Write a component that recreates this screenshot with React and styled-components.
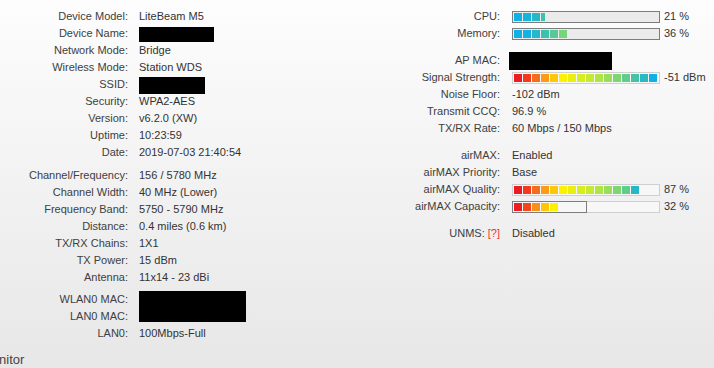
import React from 'react'
import styled, {createGlobalStyle} from 'styled-components'

const GlobalStyle = createGlobalStyle`
  html, body {
    margin: 0;
    padding: 0;
  }
  body {
    width: 714px;
    height: 368px;
    overflow: hidden;
    font-family: "Liberation Sans", Arial, sans-serif;
    font-size: 11px;
    color: #333;
    background: linear-gradient(to bottom, #fdfdfd 0%, #e7e7e7 100%);
  }
`

const Page = styled.div`
  display: flex;
  flex-direction: column;
  padding-top: 8px;
`

const Columns = styled.div`
  display: flex;
`

const Column = styled.div`
  width: ${p => p.width}px;
  display: flex;
  flex-direction: column;
`

const Group = styled.div`
  display: grid;
  grid-template-columns: ${p => p.labelWidth}px 1fr;
  column-gap: ${p => p.gap}px;
  grid-auto-rows: 17px;
  line-height: 17px;
  margin-top: ${p => p.top || 0}px;
`

const Label = styled.div`
  text-align: right;
  color: #404040;
  white-space: nowrap;
`

const Value = styled.div`
  white-space: nowrap;
  display: flex;
  align-items: center;
  grid-row: ${p => (p.span ? `span ${p.span}` : 'auto')};
`

const Redacted = styled.div`
  background: #000;
  width: ${p => p.w}px;
  height: ${p => p.h}px;
  margin-top: ${p => p.dy || 0}px;
  margin-left: ${p => p.dx || 0}px;
  align-self: flex-start;
`

const Help = styled.span`
  color: #f03030;
`

const Track = styled.div`
  width: 148px;
  height: 12px;
  box-sizing: border-box;
  border: 1px solid ${p => (p.light ? '#cfcfcf' : '#7d7d7d')};
  background: ${p => (p.light ? '#f7f7f7' : '#ebebeb')};
  display: flex;
  margin-right: 4px;
`

const Fill = styled.div`
  width: ${p => p.w}px;
  height: 12px;
  margin: -1px 0 0 -1px;
  box-sizing: border-box;
  border: 1px solid #7d7d7d;
  padding: 1px;
  display: flex;
`

const Segments = styled.div`
  display: flex;
  padding: 1px;
  height: 100%;
  box-sizing: border-box;
`

const Segment = styled.div`
  width: ${p => p.w || 8}px;
  height: 100%;
  margin-right: 1px;
  background: ${p => p.color};
  flex-shrink: 0;
`

const Heading = styled.div`
  font-size: 13px;
  line-height: 15px;
  color: #454545;
  margin-top: 10px;
  margin-left: -19px;
`

const SIGNAL = [
  '#ec1c24', '#f23a1f', '#f76c1a', '#fb9c14', '#fdc70b', '#fdf000',
  '#e9ef12', '#d6ed21', '#c4ea31', '#ade545', '#96df5c', '#7dd673',
  '#61cd8b', '#44c3a6', '#29b9c2', '#0db1e6',
]

const CPU = [['#0db1e6'], ['#17b3db'], ['#26b8c9'], ['#3cc2aa', 4]]
const MEMORY = [['#0db1e6'], ['#14b2de'], ['#25b7cb'], ['#3bc1ae'], ['#56ca95'], ['#76d47b']]
const QUALITY = SIGNAL.slice(0, 13).concat(['#27b8c6']).map(c => [c])
const CAPACITY = [['#ec1c24'], ['#f2471d'], ['#f98f18'], ['#fdc60b'], ['#fdf000']]

function Bar({segments, light}) {
  return (
    <Track light={light}>
      <Segments>
        {segments.map(([color, w], i) => (
          <Segment key={i} color={color} w={w} />
        ))}
      </Segments>
    </Track>
  )
}

function SplitBar({segments, width}) {
  return (
    <Track light>
      <Fill w={width}>
        {segments.map(([color, w], i) => (
          <Segment key={i} color={color} w={w} />
        ))}
      </Fill>
    </Track>
  )
}

const Row = ({label, children}) => (
  <>
    <Label>{label}</Label>
    <Value>{children}</Value>
  </>
)

export default function App() {
  return (
    <>
      <GlobalStyle />
      <Page>
        <Columns>
          <Column width={400}>
            <Group labelWidth={128} gap={11}>
              <Row label="Device Model:">LiteBeam M5</Row>
              <Row label="Device Name:"><Redacted w={75} h={15} dy={2} /></Row>
              <Row label="Network Mode:">Bridge</Row>
              <Row label="Wireless Mode:">Station WDS</Row>
              <Row label="SSID:"><Redacted w={66} h={17} dy={1} /></Row>
              <Row label="Security:">WPA2-AES</Row>
              <Row label="Version:">v6.2.0 (XW)</Row>
              <Row label="Uptime:">10:23:59</Row>
              <Row label="Date:">2019-07-03 21:40:54</Row>
            </Group>
            <Group labelWidth={128} gap={11} top={6}>
              <Row label="Channel/Frequency:">156 / 5780 MHz</Row>
              <Row label="Channel Width:">40 MHz (Lower)</Row>
              <Row label="Frequency Band:">5750 - 5790 MHz</Row>
              <Row label="Distance:">0.4 miles (0.6 km)</Row>
              <Row label="TX/RX Chains:">1X1</Row>
              <Row label="TX Power:">15 dBm</Row>
              <Row label="Antenna:">11x14 - 23 dBi</Row>
            </Group>
            <Group labelWidth={128} gap={11} top={5}>
              <Label>WLAN0 MAC:</Label>
              <Value span={2}><Redacted w={107} h={31} dy={0} /></Value>
              <Label>LAN0 MAC:</Label>
              <Row label="LAN0:">100Mbps-Full</Row>
            </Group>
          </Column>
          <Column width={314}>
            <Group labelWidth={100} gap={12}>
              <Row label="CPU:"><Bar segments={CPU} />21 %</Row>
              <Row label="Memory:"><Bar segments={MEMORY} />36 %</Row>
            </Group>
            <Group labelWidth={100} gap={12} top={10}>
              <Row label="AP MAC:"><Redacted w={103} h={18} dy={0} dx={-3} /></Row>
              <Row label="Signal Strength:">
                <Bar segments={SIGNAL.map(c => [c])} light />-51 dBm
              </Row>
              <Row label="Noise Floor:">-102 dBm</Row>
              <Row label="Transmit CCQ:">96.9 %</Row>
              <Row label="TX/RX Rate:">60 Mbps / 150 Mbps</Row>
            </Group>
            <Group labelWidth={100} gap={12} top={10}>
              <Row label="airMAX:">Enabled</Row>
              <Row label="airMAX Priority:">Base</Row>
              <Row label="airMAX Quality:"><Bar segments={QUALITY} light />87 %</Row>
              <Row label="airMAX Capacity:"><SplitBar segments={CAPACITY} width={75} />32 %</Row>
            </Group>
            <Group labelWidth={100} gap={12} top={10}>
              <Row label={<>UNMS: <Help>[?]</Help></>}>Disabled</Row>
            </Group>
          </Column>
        </Columns>
        <Heading>Monitor</Heading>
      </Page>
    </>
  )
}
